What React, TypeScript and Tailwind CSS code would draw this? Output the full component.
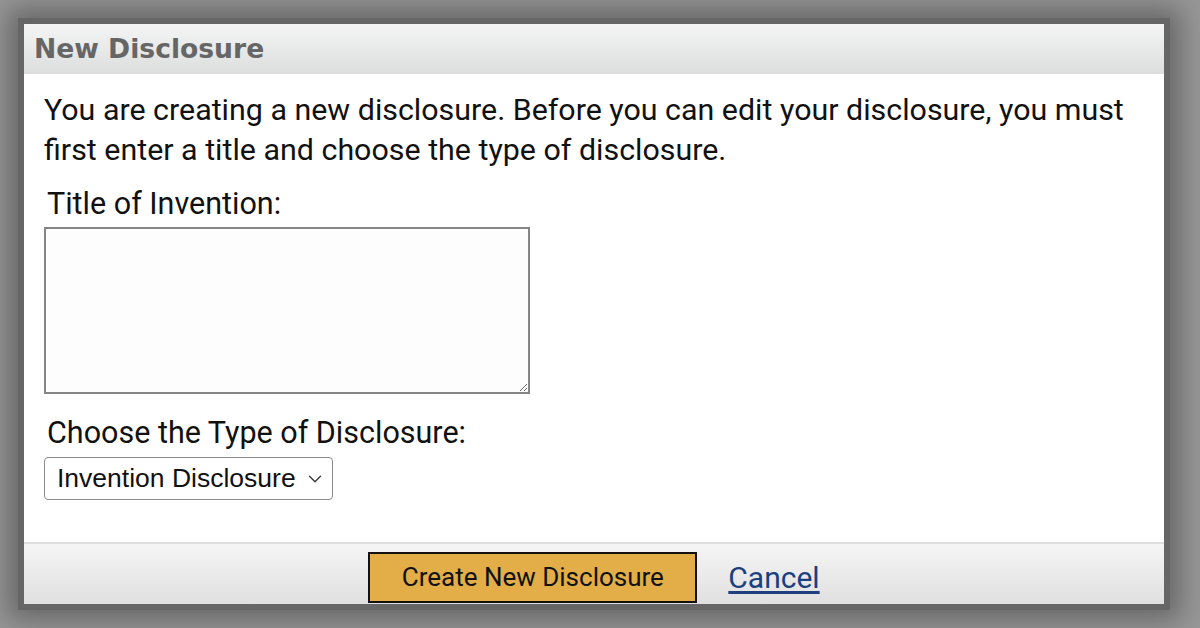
import { ChevronDown } from "lucide-react";

const NewDisclosureDialog = () => {
  return (
    <div className="w-[1200px] h-[628px] bg-[#979797] pt-[18px] pl-[18px] overflow-hidden">
      <div className="w-[1152px] h-[592px] border-[6px] border-[#666666] flex flex-col shadow-[0_0_26px_10px_rgba(0,0,0,0.32)] font-['Roboto',sans-serif]">
        {/* Title bar */}
        <div className="h-[50px] shrink-0 flex items-center pl-[10px] bg-gradient-to-b from-[#f5f5f5] to-[#dcdddd]">
          <h2 className="font-['DejaVu_Sans',sans-serif] font-bold text-[26.6px] text-[#666666] leading-none">
            New Disclosure
          </h2>
        </div>

        {/* Body */}
        <div className="flex-1 bg-white pl-[20px] pt-[16px]">
          <p className="text-[30.4px] leading-[40px] text-[#111111] pr-[20px]">
            You are creating a new disclosure. Before you can edit your disclosure, you must
            first enter a title and choose the type of disclosure.
          </p>

          <label className="block mt-[16px] ml-[3px] text-[30.5px] leading-[36px] text-[#111111]">
            Title of Invention:
          </label>
          <textarea className="block mt-[5px] w-[486px] h-[167px] border-2 border-[#858585] bg-[#fdfdfd]" />

          <label className="block mt-[21px] ml-[3px] text-[30.5px] leading-[36px] text-[#111111]">
            Choose the Type of Disclosure:
          </label>
          <div className="mt-[6px] w-[289px] h-[43px] flex items-center border border-[#8a8a8a] rounded-[4px] bg-white">
            <select className="appearance-none flex-1 pl-[12px] font-['Liberation_Sans',sans-serif] text-[26.5px] text-[#111111] outline-none">
              <option>Invention Disclosure</option>
            </select>
            <ChevronDown className="w-[22px] h-[22px] mr-[6px] text-[#333333]" strokeWidth={1.4} />
          </div>
        </div>

        {/* Footer actions */}
        <div className="h-[62px] shrink-0 border-t-2 border-[#dedede] bg-gradient-to-b from-[#f5f5f5] to-[#e0e0e0] flex items-center justify-center gap-[31px] pt-[6px]">
          <button className="w-[329px] h-[51px] bg-[#e3ae47] border-2 border-[#111111] text-[26px] text-[#111111]">
            Create New Disclosure
          </button>
          <a href="#" className="text-[30px] text-[#1d3f7e] underline underline-offset-[3px]">
            Cancel
          </a>
        </div>
      </div>
    </div>
  );
};

export default function App() {
  return <NewDisclosureDialog />;
}
